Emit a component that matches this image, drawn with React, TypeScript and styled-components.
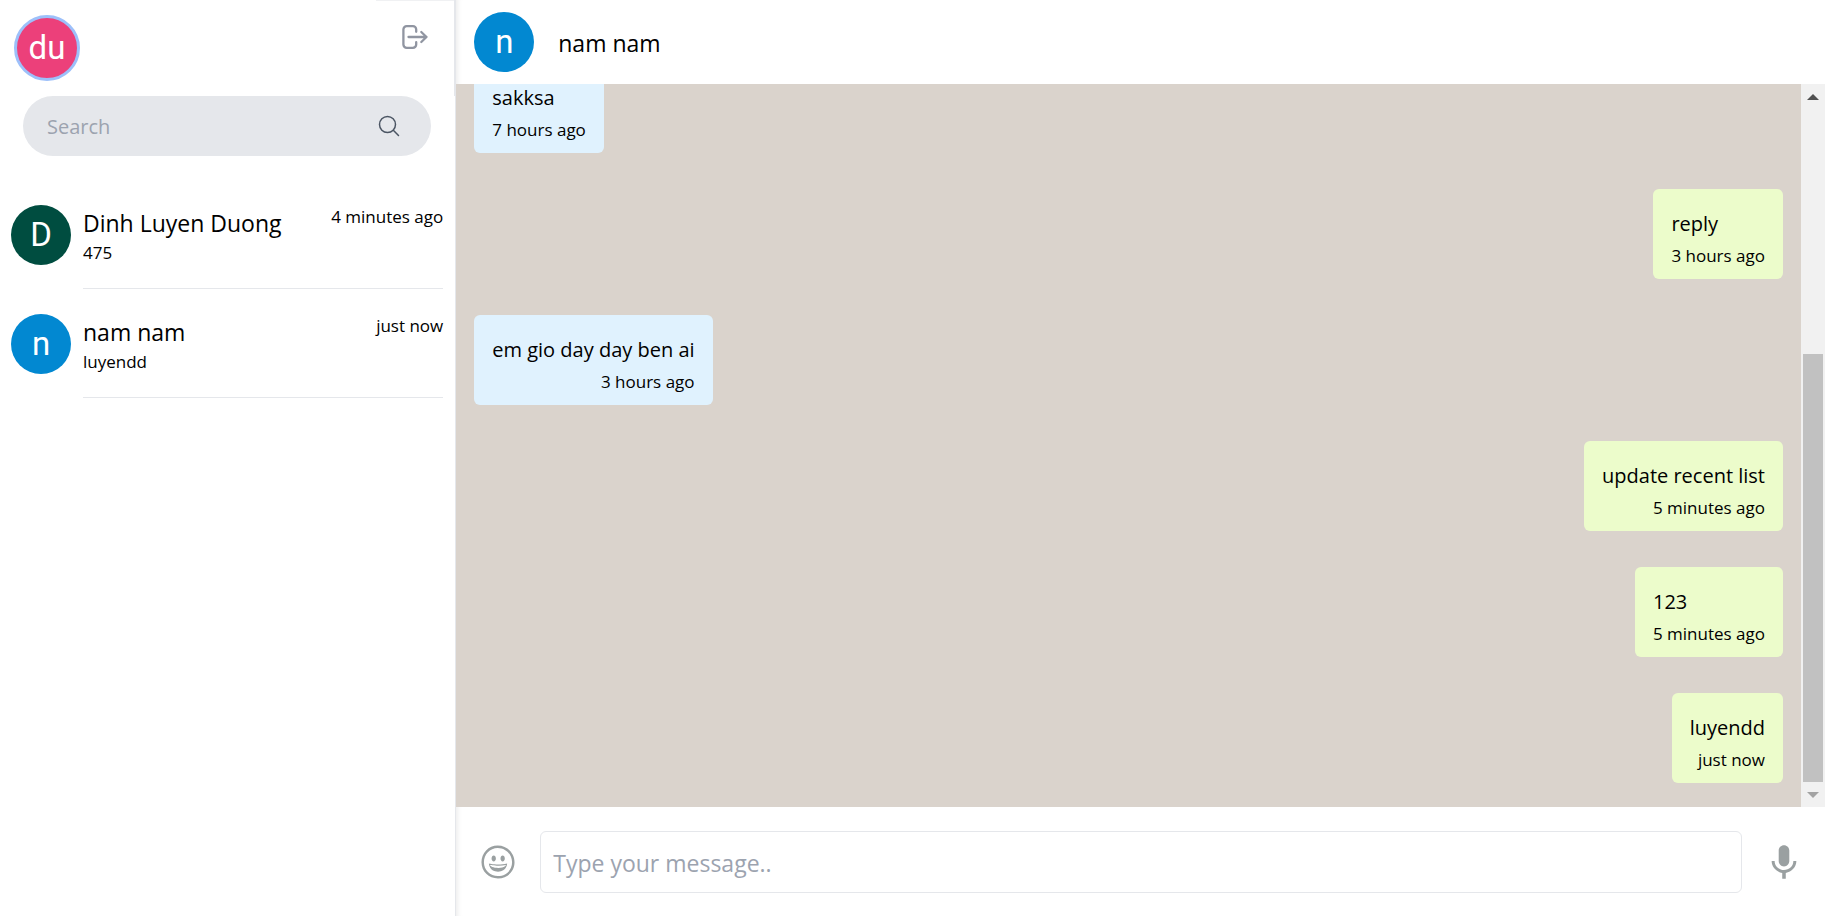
import React from "react";
import styled, { createGlobalStyle } from "styled-components";

const Global = createGlobalStyle`
  *, *::before, *::after { box-sizing: border-box; }
  body { margin: 0; font-family: "Open Sans", "Noto Sans", sans-serif; color: #000; background: #fff; }
  button { padding: 0; border: 0; background: none; color: inherit; cursor: pointer; display: block; }
  svg { display: block; }
  h1, h2, p, ul { margin: 0; padding: 0; font-weight: 400; }
`;

const Page = styled.div`
  display: grid;
  grid-template-columns: minmax(0, 1fr) minmax(0, 3fr);
  height: 100vh;
`;

const Sidebar = styled.aside`
  display: flex;
  flex-direction: column;
  border-right: 1px solid #e5e7eb;
`;

const SidebarHeader = styled.header`
  display: flex;
  justify-content: space-between;
  align-items: flex-start;
  height: 96px;
  padding-left: 14px;
  border-right: 1px solid #e5e7eb;
`;

const ProfileSlot = styled.div`
  padding-top: 15px;
`;

const Avatar = styled.span<{ $color: string; $ring?: boolean }>`
  flex: none;
  display: flex;
  align-items: center;
  justify-content: center;
  width: ${(p) => (p.$ring ? 66 : 60)}px;
  height: ${(p) => (p.$ring ? 66 : 60)}px;
  border: ${(p) => (p.$ring ? "3px solid #9dc0fa" : "0")};
  border-radius: 50%;
  background: ${(p) => p.$color};
  color: #fff;
  font: 33px/60px Roboto, sans-serif;
`;

const LogoutSlot = styled.div`
  width: 78px;
  padding: 23px 0 0 25px;
  border-top: 1px solid #f0f1f3;
  color: #9095a1;
`;

const SearchForm = styled.form`
  display: flex;
  align-items: center;
  height: 60px;
  margin: 0 24px 0 23px;
  padding: 0 30px 0 22px;
  border-radius: 30px;
  background: #e5e7eb;
  color: #4b5563;
`;

const SearchInput = styled.input`
  flex: 1;
  min-width: 0;
  padding: 2px 2px 0;
  border: 0;
  outline: 0;
  background: none;
  font: 20px/30px "Open Sans", sans-serif;
  &::placeholder { color: #9ca3af; opacity: 1; }
`;

const ChatList = styled.ul`
  list-style: none;
  padding: 37px 12px 0 11px;
`;

const ChatItem = styled.li`
  display: flex;
  gap: 12px;
  height: 109px;
  padding-top: 12px;
`;

const ChatBody = styled.div`
  flex: 1;
  min-width: 0;
  display: flex;
  justify-content: space-between;
  height: 84px;
  border-bottom: 1px solid #e5e7eb;
`;

const ChatName = styled.h2`
  font-size: 23px;
  line-height: 36px;
`;

const ContactName = styled.h1`
  padding-top: 2px;
  font-size: 23px;
  line-height: 36px;
`;

const Small = styled.p`
  font-size: 17px;
  line-height: 24px;
  white-space: nowrap;
`;

const Main = styled.main`
  display: flex;
  flex-direction: column;
  min-height: 0;
  box-shadow: inset 6px 0 6px -6px rgba(0, 0, 0, 0.12);
`;

const MainHeader = styled.header`
  flex: none;
  display: flex;
  align-items: center;
  gap: 24px;
  height: 84px;
  padding: 0 18px;
`;

const Viewport = styled.section`
  flex: 1;
  min-height: 0;
  display: flex;
  background: #dad3cc;
`;

const Messages = styled.div`
  flex: 1;
  display: flex;
  flex-direction: column;
  justify-content: flex-end;
  gap: 36px;
  padding: 0 18px 24px;
  overflow: hidden;
`;

const Bubble = styled.article<{ $mine?: boolean }>`
  flex: none;
  align-self: ${(p) => (p.$mine ? "flex-end" : "flex-start")};
  padding: 18px 18px 8px;
  border-radius: 6px;
  background: ${(p) => (p.$mine ? "#ecfccb" : "#e0f2fe")};
`;

const MessageText = styled.p`
  font-size: 20px;
  line-height: 34px;
`;

const MessageTime = styled(Small)`
  line-height: 30px;
  text-align: right;
`;

const ScrollBar = styled.div`
  flex: none;
  display: flex;
  flex-direction: column;
  width: 24px;
  background: #f1f1f1;
`;

const ScrollArrow = styled.button<{ $dim?: boolean }>`
  height: 25px;
  flex: none;
  display: flex;
  align-items: center;
  justify-content: center;
  color: ${(p) => (p.$dim ? "#a3a3a3" : "#505050")};
`;

const ScrollTrack = styled.div`
  flex: 1;
  display: flex;
  flex-direction: column;
  padding: 0 2px;
  &::before { content: ""; flex: 4; }
`;

const ScrollThumb = styled.div`
  flex: 7;
  background: #c1c1c1;
`;

const Composer = styled.form`
  flex: none;
  display: flex;
  align-items: center;
  gap: 24px;
  height: 109px;
  padding: 0 23px 0 24px;
  color: #9aa0a1;
`;

const MessageInput = styled.input`
  flex: 1;
  min-width: 0;
  height: 62px;
  padding: 2px 12px 0;
  border: 1px solid #e5e7eb;
  border-radius: 6px;
  outline: 0;
  background: #fff;
  font: 23px/36px "Open Sans", sans-serif;
  &::placeholder { color: #9ca3af; opacity: 1; }
`;

const chats = [
  { name: "Dinh Luyen Duong", last: "475", time: "4 minutes ago", initial: "D", color: "#004d40" },
  { name: "nam nam", last: "luyendd", time: "just now", initial: "n", color: "#0288d1" },
];

const messages = [
  { text: "sakksa", time: "7 hours ago", mine: false },
  { text: "reply", time: "3 hours ago", mine: true },
  { text: "em gio day day ben ai", time: "3 hours ago", mine: false },
  { text: "update recent list", time: "5 minutes ago", mine: true },
  { text: "123", time: "5 minutes ago", mine: true },
  { text: "luyendd", time: "just now", mine: true },
];

const LogoutIcon = () => (
  <svg width="28" height="26" viewBox="0 0 28 26" fill="none" stroke="currentColor" strokeWidth="2.3" strokeLinecap="round" strokeLinejoin="round">
    <path d="M15.200 7.800V5.500a3.300 3.300 0 0 0-3.300-3.300h-6.200a3.300 3.300 0 0 0-3.300 3.300v15a3.300 3.300 0 0 0 3.300 3.300h6.200a3.300 3.300 0 0 0 3.300-3.300V18.200M7.500 13h18M20.300 8l5.200 5-5.200 5" />
  </svg>
);

const SearchIcon = () => (
  <svg width="24" height="24" viewBox="0 0 24 24" fill="none" stroke="currentColor" strokeWidth="1.500" strokeLinecap="round">
    <circle cx="10.500" cy="10.500" r="8" />
    <path d="M16.300 16.300 21.500 21.500" />
  </svg>
);

const SmileIcon = () => (
  <svg width="36" height="36" viewBox="0 0 24 24" fill="currentColor">
    <path d="M9.153 11.603c.795 0 1.439-.879 1.439-1.962s-.644-1.962-1.439-1.962-1.439.879-1.439 1.962.644 1.962 1.439 1.962zm-3.204 1.362c-.026-.307-.131 5.218 6.063 5.551 6.066-.25 6.066-5.551 6.066-5.551-6.078 1.416-12.129 0-12.129 0zm11.363 1.108s-.669 1.959-5.051 1.959c-3.505 0-5.388-1.164-5.607-1.959 0 0 5.912 1.055 10.658 0zM11.804 1.011C5.609 1.011.978 6.033.978 12.228s4.826 10.761 11.021 10.761S23.020 18.423 23.020 12.228c.001-6.195-5.021-11.217-11.216-11.217zM12 21.354c-5.273 0-9.381-3.886-9.381-9.159s3.942-9.548 9.215-9.548 9.548 4.275 9.548 9.548c-.001 5.272-4.109 9.159-9.382 9.159zm3.108-9.751c.795 0 1.439-.879 1.439-1.962s-.644-1.962-1.439-1.962-1.439.879-1.439 1.962.644 1.962 1.439 1.962z" />
  </svg>
);

const MicIcon = () => (
  <svg width="36" height="36" viewBox="0 0 24 24" fill="currentColor">
    <path d="M11.999 14.942c2.001 0 3.531-1.530 3.531-3.531V4.350c0-2.001-1.530-3.531-3.531-3.531S8.469 2.350 8.469 4.350v7.061c0 2.001 1.530 3.531 3.530 3.531zm6.238-3.530c0 3.531-2.942 6.002-6.237 6.002s-6.237-2.471-6.237-6.002H3.761c0 4.001 3.178 7.297 7.061 7.885v3.884h2.354v-3.884c3.884-.588 7.061-3.884 7.061-7.885h-2z" />
  </svg>
);

const Arrow = ({ down }: { down?: boolean }) => (
  <svg width="12" height="6" viewBox="0 0 12 6" fill="currentColor">
    <path d={down ? "M0 0h12L6 6z" : "M0 6h12L6 0z"} />
  </svg>
);

export default function App() {
  return (
    <Page>
      <Global />
      <Sidebar>
        <SidebarHeader>
          <ProfileSlot>
            <Avatar $color="#ec407a" $ring>du</Avatar>
          </ProfileSlot>
          <LogoutSlot>
            <button type="button" aria-label="Log out"><LogoutIcon /></button>
          </LogoutSlot>
        </SidebarHeader>
        <SearchForm role="search" onSubmit={(e) => e.preventDefault()}>
          <SearchInput type="text" placeholder="Search" aria-label="Search" />
          <button type="submit" aria-label="Run search"><SearchIcon /></button>
        </SearchForm>
        <ChatList>
          {chats.map((c) => (
            <ChatItem key={c.name}>
              <Avatar $color={c.color}>{c.initial}</Avatar>
              <ChatBody>
                <div>
                  <ChatName>{c.name}</ChatName>
                  <Small>{c.last}</Small>
                </div>
                <Small>{c.time}</Small>
              </ChatBody>
            </ChatItem>
          ))}
        </ChatList>
      </Sidebar>
      <Main>
        <MainHeader>
          <Avatar $color="#0288d1">n</Avatar>
          <ContactName>nam nam</ContactName>
        </MainHeader>
        <Viewport>
          <Messages>
            {messages.map((m, i) => (
              <Bubble key={i} $mine={m.mine}>
                <MessageText>{m.text}</MessageText>
                <MessageTime>{m.time}</MessageTime>
              </Bubble>
            ))}
          </Messages>
          <ScrollBar>
            <ScrollArrow type="button" aria-label="Scroll up"><Arrow /></ScrollArrow>
            <ScrollTrack><ScrollThumb /></ScrollTrack>
            <ScrollArrow type="button" aria-label="Scroll down" $dim><Arrow down /></ScrollArrow>
          </ScrollBar>
        </Viewport>
        <Composer onSubmit={(e) => e.preventDefault()}>
          <button type="button" aria-label="Insert emoji"><SmileIcon /></button>
          <MessageInput type="text" placeholder="Type your message.." aria-label="Message" />
          <button type="button" aria-label="Record voice message"><MicIcon /></button>
        </Composer>
      </Main>
    </Page>
  );
}
